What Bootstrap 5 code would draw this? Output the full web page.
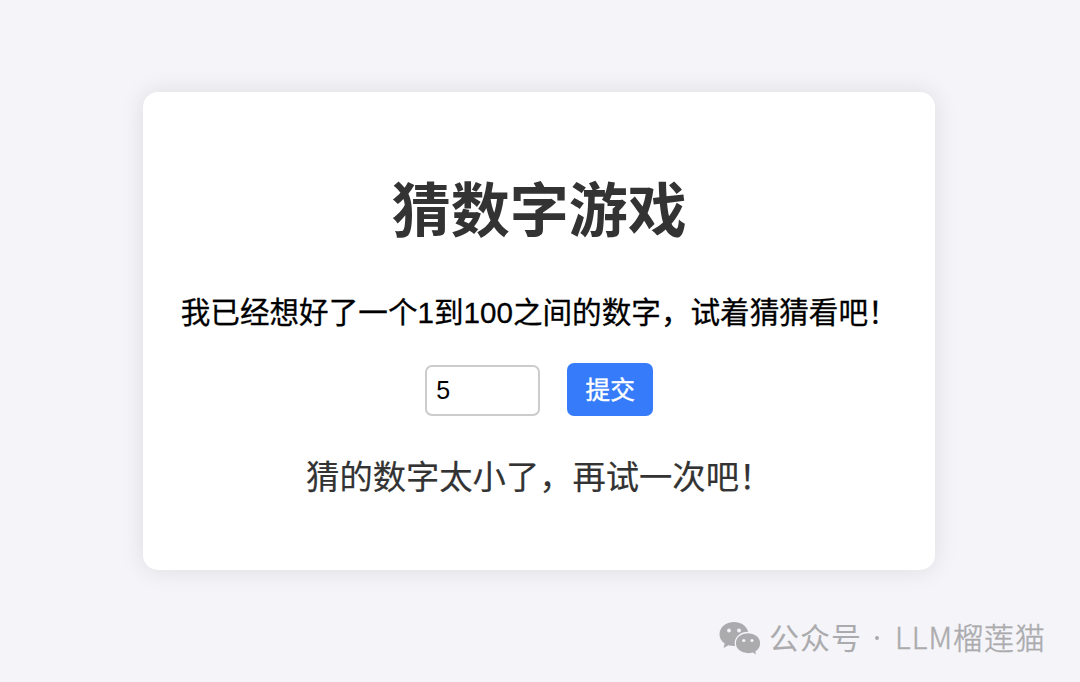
<!DOCTYPE html>
<html lang="zh-CN">
<head>
<meta charset="utf-8">
<meta name="viewport" content="width=device-width, initial-scale=1">
<title>猜数字游戏</title>
<link href="https://cdn.jsdelivr.net/npm/bootstrap@5.3.0/dist/css/bootstrap.min.css" rel="stylesheet">
<style>
body{background:#f4f4f9;font-family:"Liberation Sans","Noto Sans CJK SC",sans-serif;color:#000}
.game-page{height:682px;padding-top:92px}
.game-card{width:792.400px;height:478px;margin-left:143px;padding-top:84px;border:0;border-radius:15px;box-shadow:0 0 24px rgba(0,0,0,.1)}
.game-title{font-size:59px;line-height:72px;font-weight:700;color:#333}
.game-intro{font-size:29.6px;line-height:36px;margin-top:47px;-webkit-text-stroke:.3px #000}
.guess-row{margin-top:32px;gap:27px;height:53px}
.guess-input{width:115px;height:51px;border:2px solid #ccc;border-radius:7px;padding:1px 9px 0;font-size:25px;color:#000;margin-top:1px}
.guess-btn{width:86px;height:53px;border:0;border-radius:7px;background:#367bf9;font-size:24.7px;line-height:51px;padding:2px 0 0;-webkit-text-stroke:.4px #fff}
.guess-result{font-size:33.3px;line-height:40px;margin-top:42px;color:#333;-webkit-text-stroke:.2px #333}
.account{margin:42px 34px 0 0;height:48px;color:#ababad;font-family:"Noto Sans CJK SC",sans-serif;font-size:30px;line-height:48px;white-space:pre}
.account svg{width:42px;height:36px;margin:5px 8px 0 0}
.account-label{letter-spacing:1px}
.account-dot{width:4px;height:4px;border-radius:50%;background:#ababad;margin:4px 16px 0 13px}
.account-name{font-weight:300;letter-spacing:1px;-webkit-text-stroke:.45px #ababad}
</style>
</head>
<body>
<div class="game-page d-flex flex-column overflow-hidden">
  <main class="game-card card flex-shrink-0 text-center">
    <h1 class="game-title mb-0">猜数字游戏</h1>
    <p class="game-intro mb-0">我已经想好了一个1到100之间的数字，试着猜猜看吧！</p>
    <div class="guess-row d-flex justify-content-center align-items-center">
      <input class="guess-input form-control" type="text" inputmode="numeric" value="5" aria-label="数字">
      <button class="guess-btn btn btn-primary" type="button">提交</button>
    </div>
    <p class="guess-result mb-0">猜的数字太小了，再试一次吧！</p>
  </main>
  <footer class="account d-flex justify-content-end align-items-center">
    <svg viewBox="0 0 42 36" aria-hidden="true">
      <path fill="#ababad" d="M15 1C7 1 .5 6.400.5 13.200c0 3.800 2 7 5.200 9.300L4.500 27l5-2.700c1.700.5 3.500.8 5.500.8 8 0 14.500-5.200 14.500-11.900S23 1 15 1Z"/>
      <path fill="#ababad" stroke="#f4f4f9" stroke-width="1.300" d="M29 11.500c-7 0-12.700 4.700-12.700 10.700S22 33 29 33c1.700 0 3.300-.3 4.700-.8l4.500 2.500-1.200-4c3-2 4.700-5 4.700-8.500 0-6-5.700-10.700-12.700-10.700Z"/>
      <g fill="#f4f4f9"><circle cx="10" cy="9.500" r="1.900"/><circle cx="20" cy="9.500" r="1.900"/><circle cx="24.800" cy="19.500" r="1.600"/><circle cx="33" cy="19.500" r="1.600"/></g>
    </svg>
    <span class="account-label">公众号</span><span class="account-dot"></span><span class="account-name">LLM榴莲猫</span>
  </footer>
</div>
<script src="https://cdn.jsdelivr.net/npm/bootstrap@5.3.0/dist/js/bootstrap.bundle.min.js"></script>
</body>
</html>
